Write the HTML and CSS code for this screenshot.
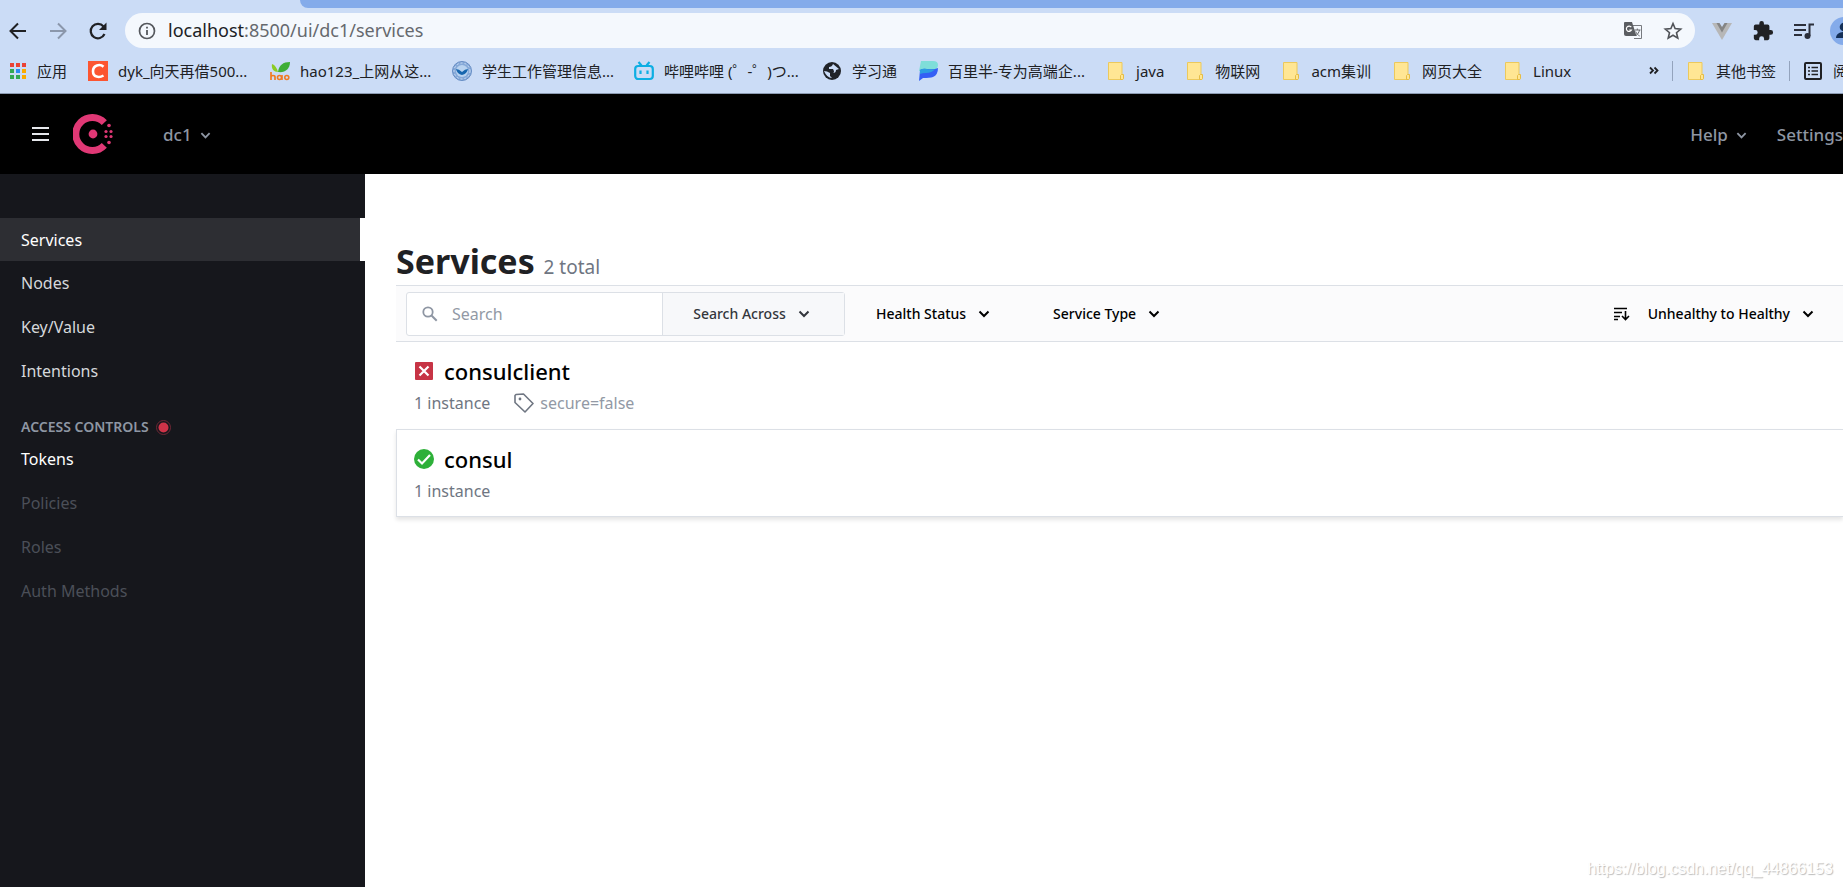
FILE: index.html
```html
<!DOCTYPE html>
<html lang="en">
<head>
<meta charset="utf-8">
<title>Services - Consul</title>
<link rel="stylesheet" href="styles.css">
</head>
<body>
<svg class="defs" aria-hidden="true">
  <symbol id="chevron" viewBox="0 0 12 12"><path d="M1.500 3.500 6 8l4.500-4.500" fill="none" stroke="currentColor" stroke-width="2"/></symbol>
  <symbol id="folder" viewBox="0 0 20 20"><path d="M2.500 1.500h13.500v13h1v4h-14.500z" fill="#ffe694" stroke="#ecc95c"/><path d="M14.500 18.500v-4l1-1h2v4l-1 1z" fill="#ffe694" stroke="#e6bd45"/></symbol>
</svg>
<div class="browser">
  <div class="tabstrip"><div class="tabstrip-fill"></div></div>
  <div class="toolbar">
    <div class="nav-buttons">
      <button class="icon-btn" aria-label="Back"><svg width="20" height="20" viewBox="0 0 20 20"><path d="M18 10H3M10 2.500 2.500 10l7.500 7.500" fill="none" stroke="#202124" stroke-width="2"/></svg></button>
      <button class="icon-btn" aria-label="Forward"><svg width="20" height="20" viewBox="0 0 20 20"><path d="M2 10h15M10 2.500 17.500 10 10 17.500" fill="none" stroke="#8b97ab" stroke-width="2"/></svg></button>
      <button class="icon-btn" aria-label="Reload"><svg width="20" height="20" viewBox="0 0 20 20"><path d="M16.500 13A7.200 7.200 0 1 1 15.500 5.500" fill="none" stroke="#202124" stroke-width="2.200"/><path d="M18.500 1.500v7.500h-7.500z" fill="#202124"/></svg></button>
    </div>
    <div class="omnibox">
      <svg width="18" height="18" viewBox="0 0 18 18"><circle cx="9" cy="9" r="7.500" fill="none" stroke="#55585d" stroke-width="1.700"/><path d="M9 8v5M9 4.700v1.800" stroke="#55585d" stroke-width="1.800"/></svg>
      <div class="url"><span class="host">localhost</span>:8500/ui/dc1/services</div>
      <button class="icon-btn" aria-label="Translate"><svg width="20" height="20" viewBox="0 0 20 20"><path d="M8 4.500h10.500v13H11" fill="#f4f8fd" stroke="#777a7f"/><path d="M2 1h7l4.500 14H3a2 2 0 0 1-2-2V2a1 1 0 0 1 1-1z" fill="#5a5d61"/><path d="M8.300 6.200A2.700 2.700 0 1 0 8.500 9H6.300" fill="none" stroke="#fff" stroke-width="1.200"/><path d="M11.500 9h6M14.300 7.500V9M16.500 9c-.5 2.500-2 4.500-3.500 5.500M12.700 10.500c.8 2 2.200 3.500 4 4.500" fill="none" stroke="#66696d"/></svg></button>
      <button class="icon-btn" aria-label="Bookmark this page"><svg width="20" height="20" viewBox="0 0 20 20"><path d="m10 2.500 2.100 5.100 5.600.5-4.200 3.600 1.300 5.500-4.800-2.900-4.800 2.900 1.300-5.500-4.200-3.600 5.600-.5z" fill="none" stroke="#505358" stroke-width="1.600"/></svg></button>
    </div>
    <div class="extensions">
      <button class="icon-btn" aria-label="Vue devtools"><svg width="20" height="20" viewBox="0 0 20 20"><path d="M0 2h20L10 19z" fill="#b7b7b7"/><path d="M4.500 2h11L10 11.500z" fill="#858585"/><path d="M7.500 2h5L10 6z" fill="#cbdcf6"/></svg></button>
      <button class="icon-btn" aria-label="Extensions"><svg width="22" height="22" viewBox="0 0 24 24"><path d="M20.500 11H19V7a2 2 0 0 0-2-2h-4V3.500a2.500 2.500 0 0 0-5 0V5H4a2 2 0 0 0-2 2v3.800h1.500a2.700 2.700 0 0 1 0 5.400H2V20a2 2 0 0 0 2 2h3.800v-1.500a2.700 2.700 0 0 1 5.400 0V22H17a2 2 0 0 0 2-2v-4h1.500a2.500 2.500 0 0 0 0-5z" fill="#202124"/></svg></button>
      <button class="icon-btn" aria-label="Media"><svg width="20" height="20" viewBox="0 0 20 20"><path d="M0 4h12M0 9h12M0 14h8" stroke="#2b2f3b" stroke-width="2"/><path d="M15.500 15V3.500H20" fill="none" stroke="#2b2f3b" stroke-width="2"/><circle cx="13.500" cy="15" r="3" fill="#2b2f3b"/></svg></button>
      <button class="avatar" aria-label="Profile"><svg width="28" height="28" viewBox="0 0 28 28"><circle cx="14" cy="14" r="14" fill="#84abea"/><circle cx="14" cy="10" r="4.300" fill="#153058"/><path d="M6 21c0-4 4-6 8-6s8 2 8 6z" fill="#153058"/></svg></button>
    </div>
  </div>
  <nav class="bookmarks" aria-label="Bookmarks">
    <a class="bm" href="#"><svg viewBox="0 0 20 20"><path d="M3 2h4v4H3zM9 2h4v4H9zM15 2h4v4h-4z" fill="#ea4335"/><path d="M3 8h4v4H3zM3 14h4v4H3z" fill="#34a853"/><path d="M9 8h4v4H9z" fill="#2c8cf0"/><path d="M9 14h4v4H9z" fill="#34a853"/><path d="M15 8h4v4h-4zM15 14h4v4h-4z" fill="#fbab00"/></svg><span>应用</span></a>
    <a class="bm bm-long" href="#"><svg viewBox="0 0 20 20"><path d="M0 0h20v20H0z" fill="#fc5531"/><path d="M15.500 5.800C12 2.500 5 4 5 10.200c0 6 6 7 10.500 4.300" fill="none" stroke="#fff" stroke-width="2.600"/></svg><span>dyk_向天再借500...</span></a>
    <a class="bm bm-long" href="#"><svg viewBox="0 0 20 20"><path d="M8 11C9 4 13 1 20 1c0 7-5 11-12 10z" fill="#3fae35"/><path d="M8 11C7 7 5 4 2 3c-1 5 2 8 6 8z" fill="#8ccb23"/><path d="M1 11v8M1 16c0-2 4-2 4 0v3" fill="none" stroke="#f17a22" stroke-width="1.700"/><circle cx="9.500" cy="16.500" r="2" fill="none" stroke="#f17a22" stroke-width="1.600"/><path d="M12 14v5" stroke="#f17a22" stroke-width="1.600"/><circle cx="16.800" cy="16.500" r="2" fill="none" stroke="#f17a22" stroke-width="1.600"/></svg><span>hao123_上网从这...</span></a>
    <a class="bm bm-long" href="#"><svg viewBox="0 0 20 20"><circle cx="10" cy="10" r="9.500" fill="#86a9d8" stroke="#668dc4"/><circle cx="10" cy="10" r="8" fill="none" stroke="#c9dcf3" stroke-dasharray="2 2"/><circle cx="10" cy="10" r="6" fill="#b9d3f0"/><path d="M4 8q3 0 6 3 3-3 6-3-1 5-6 6-5-1-6-6z" fill="#1766ae"/></svg><span>学生工作管理信息...</span></a>
    <a class="bm bm-wide" href="#"><svg viewBox="0 0 20 20"><rect x="1.200" y="5" width="17.600" height="13" rx="3" fill="none" stroke="#0daee3" stroke-width="2.200"/><path d="m4.500 1 3 3.500M15.500 1l-3 3.500M6.500 9.500V13M13.500 9.500V13" stroke="#0daee3" stroke-width="2.200"/></svg><span>哔哩哔哩 (゜-゜)つ...</span></a>
    <a class="bm" href="#"><svg viewBox="0 0 20 20"><circle cx="10" cy="10" r="9" fill="#202328"/><path d="M11 3q-1 3-4 3v2h4q2 3 0 4 3 0 3-3l3-1M2 10q3 0 6 2v3l2 2q-5 0-8-7" fill="#cbdcf6"/></svg><span>学习通</span></a>
    <a class="bm bm-wide" href="#"><svg viewBox="0 0 20 20"><path d="M3 0h12q5 0 5 4 0 5-7 6H1z" fill="#7fded9"/><path d="M1 20 2 9q3-2 7-1 7 1 11-1 0 7-5 9-3 1-10 1z" fill="#345ff5"/><path d="M2 9q3-2 7-1 5 1 8 0-3 4-9 4-4 0-6 1z" fill="#2d9de2"/></svg><span>百里半-专为高端企...</span></a>
    <a class="bm" href="#"><svg><use href="#folder"/></svg><span>java</span></a>
    <a class="bm" href="#"><svg><use href="#folder"/></svg><span>物联网</span></a>
    <a class="bm" href="#"><svg><use href="#folder"/></svg><span>acm集训</span></a>
    <a class="bm" href="#"><svg><use href="#folder"/></svg><span>网页大全</span></a>
    <a class="bm" href="#"><svg><use href="#folder"/></svg><span>Linux</span></a>
    <div class="bm-end">
      <button class="more" aria-label="More bookmarks"><svg width="10" height="10" viewBox="0 0 10 10"><path d="m1 1.500 3 3-3 3M5.500 1.500l3 3-3 3" fill="none" stroke="#202124" stroke-width="1.800"/></svg></button>
      <a class="bm bm-sep" href="#"><svg><use href="#folder"/></svg><span>其他书签</span></a>
      <a class="bm bm-sep bm-last" href="#"><svg viewBox="0 0 20 20"><rect x="2" y="2" width="16" height="16" rx="1" fill="none" stroke="#202124" stroke-width="2"/><path d="M5 6.500h2M5 10h2M5 13.500h2M8.500 6.500H15M8.500 10H15M8.500 13.500H15" stroke="#202124" stroke-width="1.600"/></svg><span>阅</span></a>
    </div>
  </nav>
</div>
<header class="app-header">
  <button class="menu-btn" aria-label="Menu"><svg width="17" height="14" viewBox="0 0 17 14"><path d="M0 1h17M0 7h17M0 13h17" stroke="#e6e8ec" stroke-width="2"/></svg></button>
  <a class="logo" href="#" aria-label="Consul"><svg width="40" height="40" viewBox="0 0 40 40"><path d="M31.300 8.700A16.500 16.500 0 1 0 31.300 31.300" fill="none" stroke="#e03875" stroke-width="7"/><g fill="#e03875"><circle cx="20" cy="20" r="4.400"/><circle cx="36" cy="11.500" r="1.800"/><circle cx="33" cy="17.500" r="1.600"/><circle cx="38" cy="17.500" r="1.600"/><circle cx="33" cy="22.500" r="1.600"/><circle cx="38" cy="22.500" r="1.600"/><circle cx="36" cy="28.500" r="1.800"/></g></svg></a>
  <button class="head-link dc">dc1 <svg class="chev"><use href="#chevron"/></svg></button>
  <div class="head-right">
    <button class="head-link">Help <svg class="chev"><use href="#chevron"/></svg></button>
    <a class="head-link" href="#">Settings</a>
  </div>
</header>
<div class="app-body">
  <nav class="sidebar" aria-label="Main">
    <a class="side active" href="#">Services</a>
    <a class="side" href="#">Nodes</a>
    <a class="side" href="#">Key/Value</a>
    <a class="side" href="#">Intentions</a>
    <h2 class="side-title">ACCESS CONTROLS <svg width="15" height="15" viewBox="0 0 15 15"><circle cx="7.500" cy="7.500" r="7" fill="none" stroke="#702735"/><circle cx="7.500" cy="7.500" r="5" fill="#cf3348"/></svg></h2>
    <a class="side bright" href="#">Tokens</a>
    <span class="side off">Policies</span>
    <span class="side off">Roles</span>
    <span class="side off">Auth Methods</span>
  </nav>
  <main class="main">
    <h1 class="title">Services <small>2 total</small></h1>
    <div class="filters">
      <div class="search">
        <label class="search-box"><svg width="16" height="16" viewBox="0 0 16 16"><circle cx="6" cy="6" r="4.700" fill="none" stroke="#8e96a3" stroke-width="1.800"/><path d="m9.500 9.500 5.200 5.200" stroke="#8e96a3" stroke-width="2"/></svg><input type="text" placeholder="Search" aria-label="Search"></label>
        <button class="filter across">Search Across <svg class="chev"><use href="#chevron"/></svg></button>
      </div>
      <button class="filter">Health Status <svg class="chev"><use href="#chevron"/></svg></button>
      <button class="filter">Service Type <svg class="chev"><use href="#chevron"/></svg></button>
      <button class="filter sort"><svg width="16" height="14" viewBox="0 0 16 14"><path d="M0 1.500h13M0 5.500h8M0 9.500h6M0 12.500h4" stroke="#000" stroke-width="1.600"/><path d="M11.500 4v8M8 9l3.500 3.500L15 9" fill="none" stroke="#000" stroke-width="1.600"/></svg><span>Unhealthy to Healthy</span> <svg class="chev"><use href="#chevron"/></svg></button>
    </div>
    <ul class="list">
      <li class="row">
        <a class="name" href="#"><svg width="20" height="20" viewBox="0 0 20 20"><rect x="1" y="1" width="18" height="18" rx="1" fill="#c73445"/><path d="m5.500 5.500 9 9M14.500 5.500l-9 9" stroke="#fff" stroke-width="2.200"/></svg>consulclient</a>
        <div class="meta"><span>1 instance</span><span class="tag"><svg width="20" height="20" viewBox="0 0 20 20"><path d="M1 2.500 2 1.500 9.500 1 19 10.500 11 19 1 9.500z" fill="none" stroke="#6f7682" stroke-width="1.600" stroke-linejoin="round"/><circle cx="6" cy="6" r="1.400" fill="#6f7682"/></svg>secure=false</span></div>
      </li>
      <li class="row raised">
        <a class="name" href="#"><svg width="20" height="20" viewBox="0 0 20 20"><circle cx="10" cy="10" r="10" fill="#2eb039"/><path d="m4 10.500 4 4L16 6" fill="none" stroke="#fff" stroke-width="2.200"/></svg>consul</a>
        <div class="meta"><span>1 instance</span></div>
      </li>
    </ul>
  </main>
</div>
<div class="watermark">https://blog.csdn.net/qq_44866153</div>
</body>
</html>
```
FILE: styles.css
```css
* { box-sizing: border-box; }
body {
  margin: 0;
  min-height: 100vh;
  display: flex;
  flex-direction: column;
  overflow: hidden;
  background: #fff;
  color: #000;
  font-family: "Noto Sans", "Noto Sans CJK SC", sans-serif;
  font-size: 16px;
}
button { border: 0; padding: 0; background: none; font: inherit; color: inherit; white-space: nowrap; }
a { color: inherit; text-decoration: none; }
svg { display: block; flex: none; }
.defs { position: absolute; width: 0; height: 0; }

.browser { background: #cbdcf6; border-bottom: 1px solid #8c9bb2; }
.tabstrip { height: 8px; padding-left: 300px; }
.tabstrip-fill { height: 8px; background: #84abea; border-bottom-left-radius: 8px; }
.toolbar { display: flex; align-items: center; padding-top: 5px; overflow: hidden; }
.nav-buttons { display: flex; gap: 20px; padding: 0 17px 0 8px; }
.omnibox {
  flex: 1;
  height: 35px;
  display: flex;
  align-items: center;
  gap: 12px;
  padding: 0 12px 0 13px;
  border-radius: 18px;
  background: #f4f8fd;
}
.url { flex: 1; padding-bottom: 2px; font-size: 18px; line-height: 24px; color: #66696e; }
.host { color: #202124; }
.omnibox .icon-btn + .icon-btn { margin-left: 8px; }
.extensions { display: flex; align-items: center; gap: 20px; padding-left: 17px; margin-right: -15px; }
.avatar { margin-left: -4px; }

.bookmarks { display: flex; align-items: center; gap: 21px; height: 45px; padding-left: 7px; font-size: 15px; color: #202124; overflow: hidden; }
.bm { display: flex; align-items: center; gap: 10px; white-space: nowrap; flex: none; }
.bm svg { width: 20px; height: 20px; }
.bm-long span { width: 131px; }
.bm-wide span { width: 137px; }
.bm-end { display: flex; align-items: center; margin-left: auto; flex: none; }
.more { margin-right: 13px; }
.bm-sep { border-left: 1px solid #93a3bd; padding-left: 13px; margin-right: 13px; height: 20px; }
.bm-last { margin-right: -5px; }

.app-header { display: flex; align-items: center; height: 80px; padding-left: 32px; background: #000; color: #8e96a3; font-weight: 500; font-size: 17px; }
.logo { margin-left: 24px; }
.head-link { display: flex; align-items: center; gap: 8px; padding-top: 2px; line-height: 24px; }
.dc { margin-left: 50px; }
.head-right { display: flex; gap: 30px; margin-left: auto; }
.chev { width: 12px; height: 12px; }
.head-link .chev { width: 11px; height: 11px; }

.app-body { flex: 1; display: flex; }
.sidebar { width: 365px; flex: none; padding-top: 44px; background: #16171c; color: #d5d7db; }
.side { display: block; height: 44px; padding-left: 21px; line-height: 44px; }
.side.active { height: 43px; background: #2d2e33; border-right: 5px solid #fff; color: #fff; }
.bright { color: #fff; }
.off { color: #4b4f58; }
.side-title { display: flex; align-items: center; gap: 7px; margin: 24px 0 0; padding-left: 21px; font-size: 14px; line-height: 20px; font-weight: 600; color: #8e96a3; }

.main { flex: 1; min-width: 0; padding: 64px 0 0 31px; }
.title { height: 47px; margin: 0; font-size: 34px; line-height: 47px; font-weight: 700; color: #1f2124; }
.title small { font-size: 19px; line-height: 20px; font-weight: 400; color: #6f7682; }
.filters { display: flex; align-items: center; height: 57px; padding: 0 29px 0 10px; border: solid #dce0e6; border-width: 1px 0; background: #fbfbfc; font-size: 14px; font-weight: 500; }
.search { display: flex; width: 439px; height: 44px; border: 1px solid #dce0e6; border-radius: 3px; background: #fff; }
.search-box { flex: 1; display: flex; align-items: center; gap: 14px; padding-left: 15px; }
.search input { width: 180px; border: 0; padding: 0; outline: 0; background: none; font: 400 16px "Noto Sans", sans-serif; }
.search input::placeholder { color: #9299a5; }
.filter { display: flex; align-items: center; justify-content: center; gap: 12px; margin-left: 31px; margin-right: 32px; }
.across { width: 182px; margin: 0; padding-right: 4px; border-left: 1px solid #dce0e6; background: #f7f8fa; color: #33363c; }
.sort { margin: 0 0 0 auto; }
.sort span { margin-left: 6px; }

.list { margin: 0; padding: 0; list-style: none; }
.row { height: 87px; padding: 15px 0 0 17px; border-left: 1px solid transparent; }
.raised { height: 88px; border: solid #dce0e6; border-width: 1px 0 1px 1px; box-shadow: 0 3px 4px #0000001a; }
.name { display: flex; gap: 10px; align-items: center; font-size: 22px; line-height: 28px; font-weight: 500; }
.meta { display: flex; gap: 24px; margin-top: 4px; line-height: 28px; color: #6f7682; font-size: 16px; }
.tag { display: flex; align-items: center; gap: 6px; color: #9299a5; }

.watermark { position: absolute; right: 10px; bottom: 8px; font: 16px/20px "Liberation Sans", sans-serif; color: #fff; text-shadow: 1px 1px 1px #bbb; }
```
